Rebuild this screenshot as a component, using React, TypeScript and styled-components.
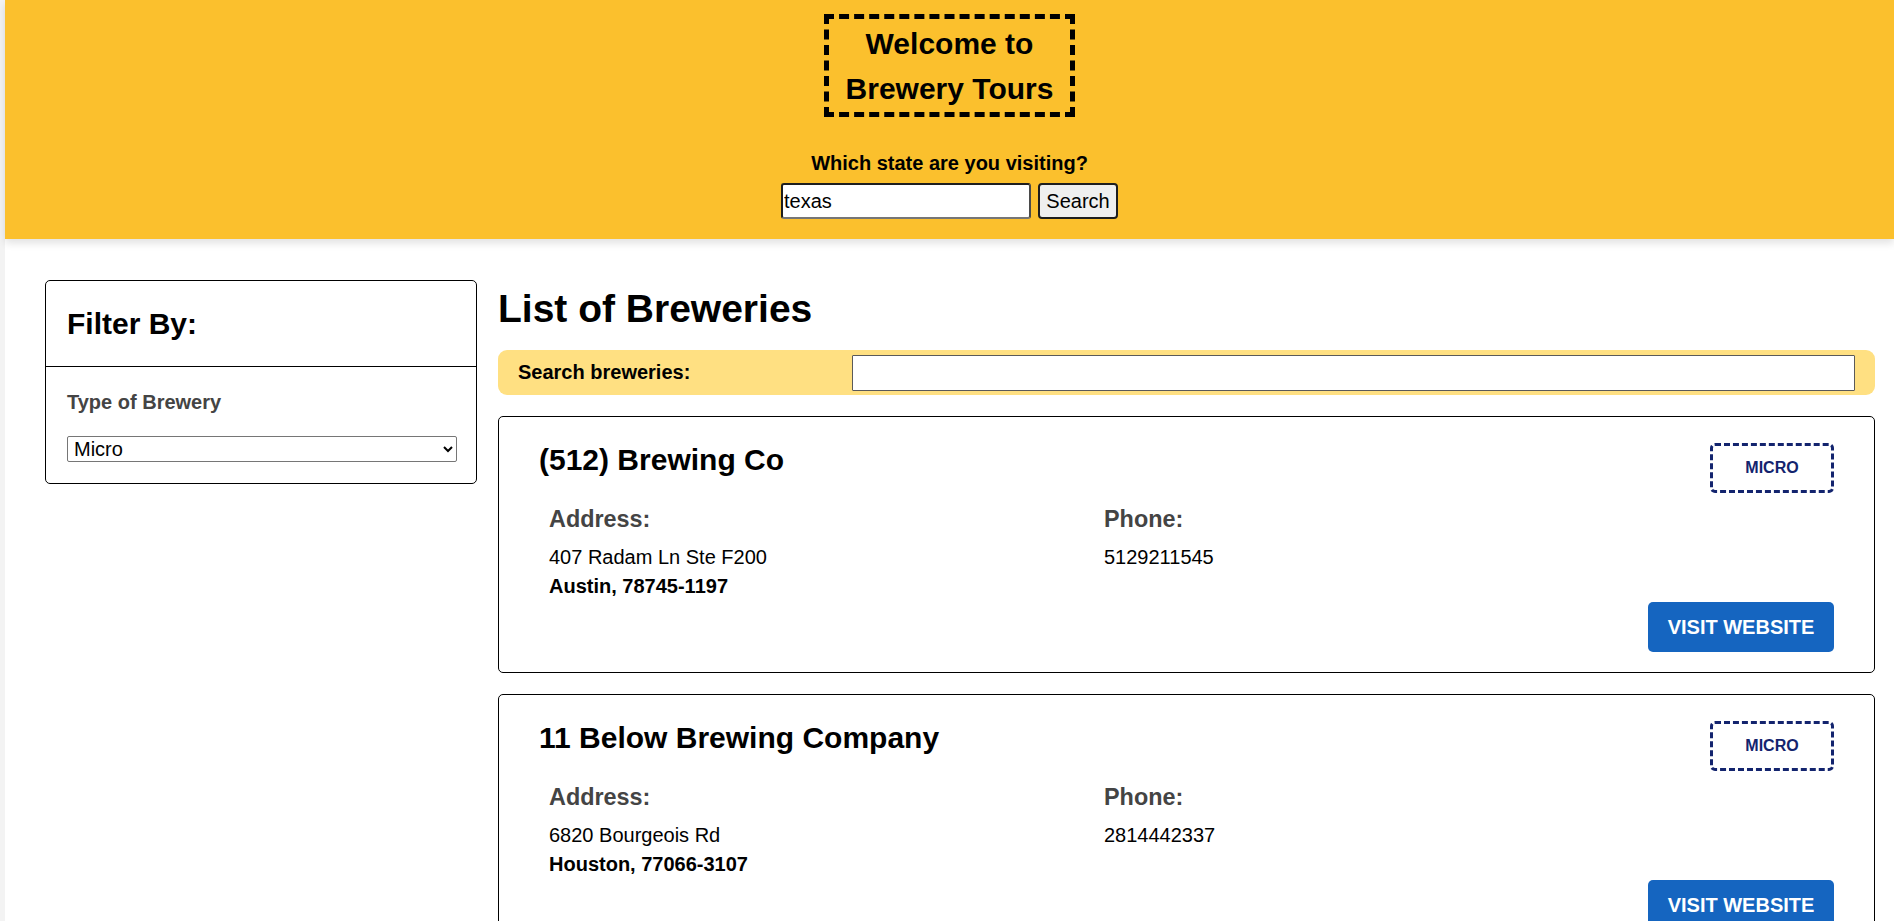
import React from "react";
import styled, { createGlobalStyle } from "styled-components";

const GlobalStyle = createGlobalStyle`
  html, body {
    margin: 0;
    padding: 0;
    background: #f3f3f3;
    font-family: "Liberation Sans", Arial, sans-serif;
    color: #000;
  }
  * { box-sizing: border-box; }
`;

const Page = styled.div`
  margin-left: 5px;
  background: #ffffff;
  min-height: 100vh;
`;

const Header = styled.header`
  background: #fbc02d;
  display: flex;
  flex-direction: column;
  align-items: center;
  padding: 14px 0 20px;
  box-shadow: 0 4px 8px rgba(0, 0, 0, 0.12);
  position: relative;
  z-index: 1;
`;

const TitleBox = styled.h2`
  margin: 0;
  width: 251px;
  border: 5px dashed #000;
  padding: 1.5px 0;
  font-size: 30px;
  line-height: 45px;
  font-weight: 700;
  text-align: center;
`;

const StateLabel = styled.label`
  margin-top: 35px;
  font-size: 20px;
  line-height: 23px;
  font-weight: 700;
`;

const SearchRow = styled.form`
  margin-top: 8px;
  display: flex;
  gap: 7px;
`;

const StateInput = styled.input`
  width: 250px;
  height: 36px;
  border: 2px solid;
  border-color: #1e1e1e #4a4a4a #767676 #1e1e1e;
  border-radius: 3px;
  padding: 0 1px;
  font-family: "Liberation Sans", Arial, sans-serif;
  font-size: 20px;
  background: #fff;
  color: #000;
  outline: none;
`;

const SearchButton = styled.button`
  width: 80px;
  height: 36px;
  border: 2px solid #1e1e1e;
  border-radius: 4px;
  background: #efefef;
  font-family: "Liberation Sans", Arial, sans-serif;
  font-size: 20px;
  color: #000;
  padding: 0;
`;

const Main = styled.main`
  display: grid;
  grid-template-columns: 432px 1fr;
  gap: 21px;
  align-items: start;
  padding: 41px 19px 40px 40px;
`;

const FilterPanel = styled.aside`
  border: 1px solid #000;
  border-radius: 5px;
`;

const FilterHead = styled.div`
  padding: 26px 21px 24px;
  border-bottom: 1px solid #000;
`;

const FilterTitle = styled.h2`
  margin: 0;
  font-size: 30px;
  line-height: 34.5px;
  font-weight: 700;
`;

const FilterBody = styled.div`
  padding: 24px 19px 21px 21px;
  display: flex;
  flex-direction: column;
`;

const FilterLabel = styled.label`
  font-size: 20px;
  line-height: 23px;
  font-weight: 700;
  color: #444;
`;

const TypeSelect = styled.select`
  margin-top: 22px;
  width: 390px;
  height: 26px;
  border: 1px solid #767676;
  border-radius: 2px;
  background: #fff;
  font-family: "Liberation Sans", Arial, sans-serif;
  font-size: 20px;
  color: #000;
  padding: 0 2px;
`;

const ListColumn = styled.section`
  display: flex;
  flex-direction: column;
`;

const ListTitle = styled.h1`
  margin: 6px 0 18px;
  font-size: 39px;
  line-height: 46px;
  font-weight: 700;
`;

const FilterBar = styled.div`
  display: grid;
  grid-template-columns: 1fr 3fr;
  align-items: center;
  height: 45px;
  padding: 0 20px;
  background: #ffe082;
  border-radius: 9px;
`;

const FilterBarLabel = styled.label`
  font-size: 20px;
  font-weight: 700;
`;

const FilterBarInput = styled.input`
  height: 36px;
  width: 100%;
  border: 1px solid #5a5a5a;
  border-radius: 1px;
  background: #fff;
  font-family: "Liberation Sans", Arial, sans-serif;
  font-size: 20px;
  outline: none;
`;

const CardList = styled.ul`
  list-style: none;
  margin: 21px 0 0;
  padding: 0;
  display: flex;
  flex-direction: column;
  gap: 21px;
`;

const Card = styled.li`
  border: 1px solid #000;
  border-radius: 5px;
  padding: 26px 40px 20px 40px;
`;

const CardHead = styled.div`
  display: flex;
  justify-content: space-between;
  align-items: flex-start;
`;

const CardName = styled.h2`
  margin: 0;
  font-size: 30px;
  line-height: 34.5px;
  font-weight: 700;
`;

const TypeBadge = styled.span`
  width: 124px;
  height: 50px;
  display: flex;
  align-items: center;
  justify-content: center;
  border: 3px dashed #13246e;
  border-radius: 5px;
  color: #13246e;
  font-size: 16px;
  font-weight: 700;
  text-transform: uppercase;
`;

const Details = styled.div`
  margin-top: 13px;
  padding-left: 10px;
  display: grid;
  grid-template-columns: 555px 1fr;
`;

const DetailLabel = styled.h3`
  margin: 0 0 10px;
  font-size: 23.4px;
  line-height: 27px;
  font-weight: 700;
  color: #444;
`;

const DetailLine = styled.p<{ $bold?: boolean }>`
  margin: 0;
  font-size: 20px;
  line-height: 29px;
  font-weight: ${(p) => (p.$bold ? 700 : 400)};
`;

const CardFoot = styled.div`
  margin-top: 1px;
  display: flex;
  justify-content: flex-end;
`;

const VisitButton = styled.a`
  width: 186px;
  height: 50px;
  display: flex;
  align-items: center;
  justify-content: center;
  background: #1565c0;
  color: #fff;
  border-radius: 5px;
  font-size: 20px;
  font-weight: 700;
  text-decoration: none;
  text-transform: uppercase;
`;

type Brewery = {
  name: string;
  type: string;
  street: string;
  city: string;
  zip: string;
  phone: string;
};

const breweries: Brewery[] = [
  {
    name: "(512) Brewing Co",
    type: "micro",
    street: "407 Radam Ln Ste F200",
    city: "Austin",
    zip: "78745-1197",
    phone: "5129211545",
  },
  {
    name: "11 Below Brewing Company",
    type: "micro",
    street: "6820 Bourgeois Rd",
    city: "Houston",
    zip: "77066-3107",
    phone: "2814442337",
  },
  {
    name: "3 Nations Brewing",
    type: "micro",
    street: "1510 Prairie Creek Dr",
    city: "Carrollton",
    zip: "75006",
    phone: "4699312278",
  },
];

export default function App() {
  return (
    <>
      <GlobalStyle />
      <Page>
        <Header>
          <TitleBox>Welcome to Brewery Tours</TitleBox>
          <StateLabel htmlFor="state">Which state are you visiting?</StateLabel>
          <SearchRow onSubmit={(e) => e.preventDefault()}>
            <StateInput id="state" defaultValue="texas" />
            <SearchButton type="submit">Search</SearchButton>
          </SearchRow>
        </Header>
        <Main>
          <FilterPanel>
            <FilterHead>
              <FilterTitle>Filter By:</FilterTitle>
            </FilterHead>
            <FilterBody>
              <FilterLabel htmlFor="type">Type of Brewery</FilterLabel>
              <TypeSelect id="type" defaultValue="micro">
                <option value="">Select a type...</option>
                <option value="micro">Micro</option>
                <option value="regional">Regional</option>
                <option value="brewpub">Brewpub</option>
              </TypeSelect>
            </FilterBody>
          </FilterPanel>
          <ListColumn>
            <ListTitle>List of Breweries</ListTitle>
            <FilterBar>
              <FilterBarLabel htmlFor="search-breweries">Search breweries:</FilterBarLabel>
              <FilterBarInput id="search-breweries" />
            </FilterBar>
            <CardList>
              {breweries.map((b) => (
                <Card key={b.name}>
                  <CardHead>
                    <CardName>{b.name}</CardName>
                    <TypeBadge>{b.type}</TypeBadge>
                  </CardHead>
                  <Details>
                    <div>
                      <DetailLabel>Address:</DetailLabel>
                      <DetailLine>{b.street}</DetailLine>
                      <DetailLine $bold>
                        {b.city}, {b.zip}
                      </DetailLine>
                    </div>
                    <div>
                      <DetailLabel>Phone:</DetailLabel>
                      <DetailLine>{b.phone}</DetailLine>
                    </div>
                  </Details>
                  <CardFoot>
                    <VisitButton href="#">Visit Website</VisitButton>
                  </CardFoot>
                </Card>
              ))}
            </CardList>
          </ListColumn>
        </Main>
      </Page>
    </>
  );
}
